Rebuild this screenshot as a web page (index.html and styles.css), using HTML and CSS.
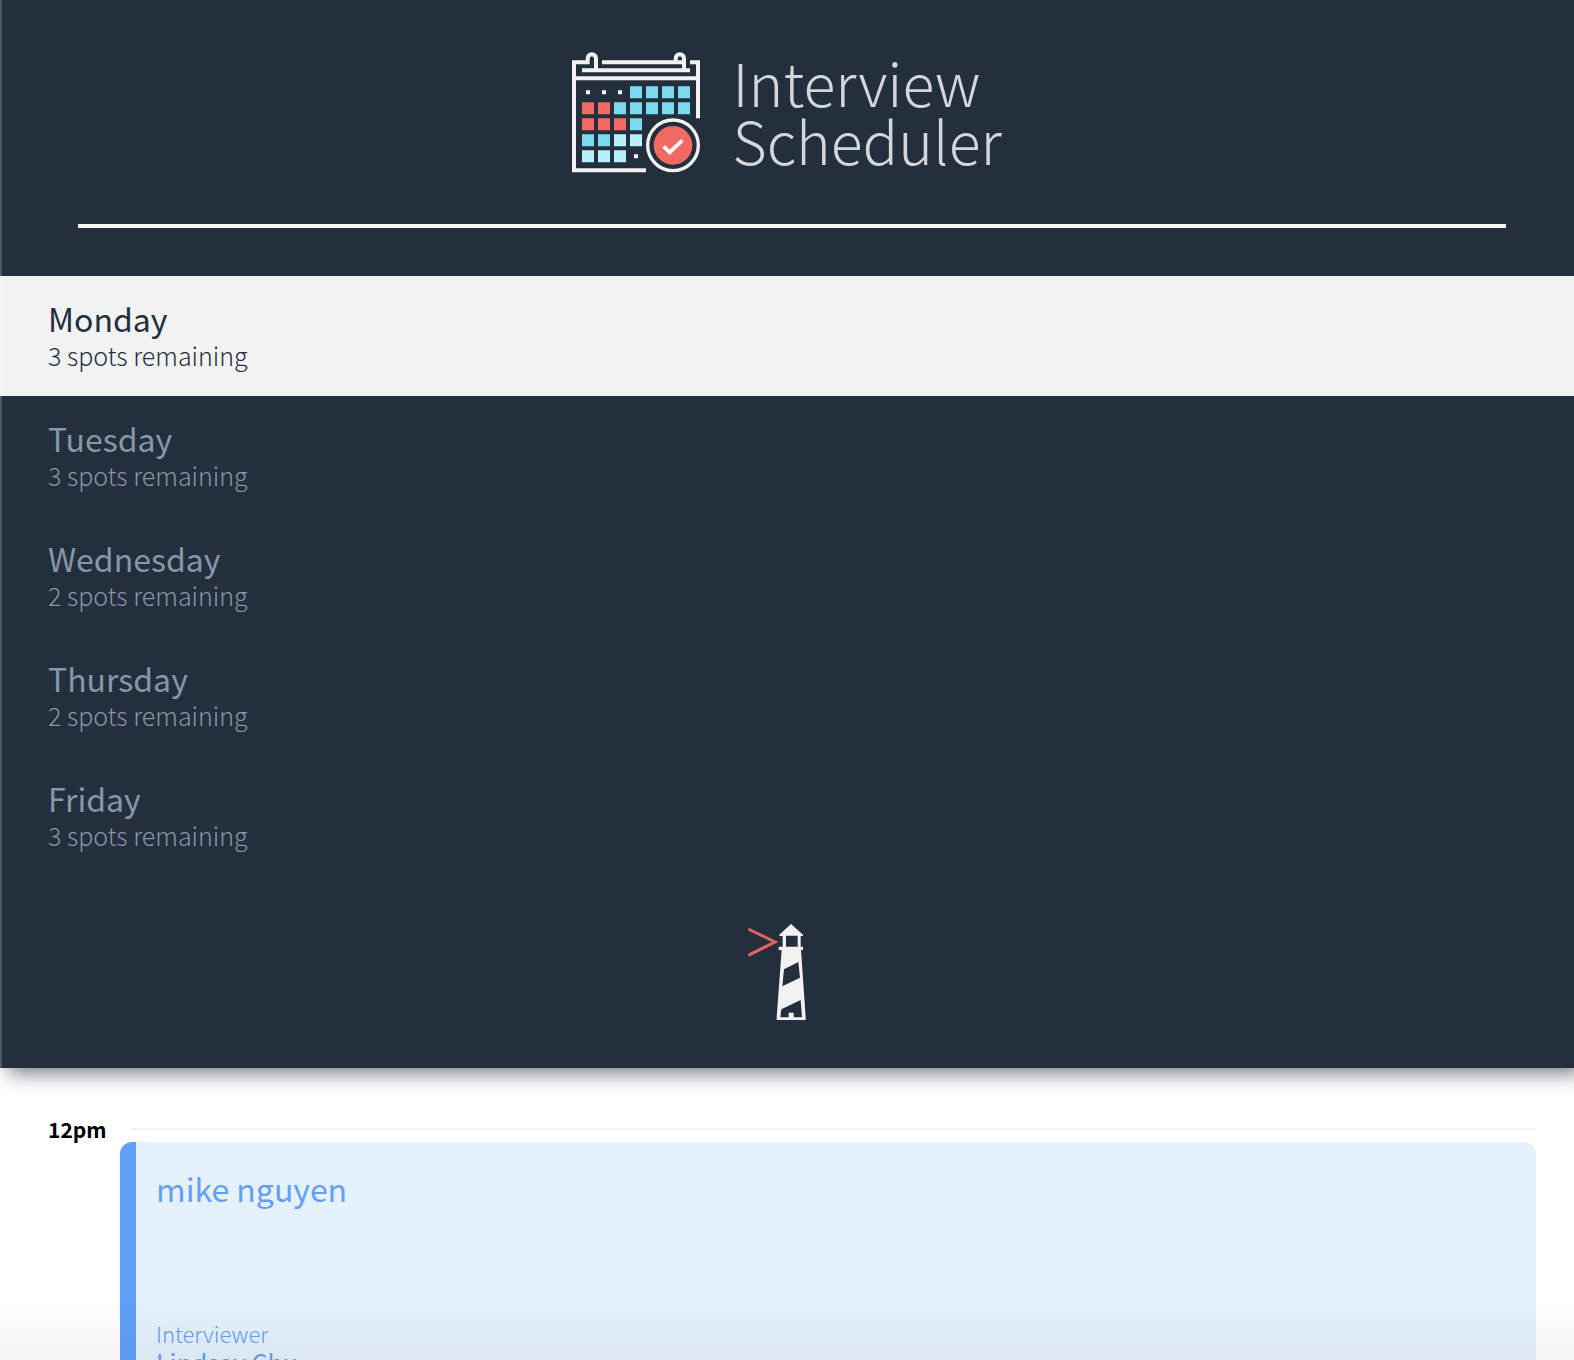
FILE: index.html
```html
<!DOCTYPE html>
<html lang="en">
<head>
  <meta charset="utf-8">
  <meta name="viewport" content="width=device-width, initial-scale=1">
  <title>Interview Scheduler</title>
  <link rel="stylesheet" href="styles.css">
</head>
<body>
  <div class="layout">
    <section class="sidebar">
      <div class="logo">
        <svg class="logo-mark" viewBox="36 20 384 363" aria-hidden="true">
          <g fill="none" stroke="#f2f2f2" stroke-width="12">
            <path d="M108 74V40a12 13 0 0 0-25 0V51H42V375H258M126 51H372M390 51H414V219M66 75H390M372 74V40a12 13 0 0 0-25 0V50M42 99H414"/>
            <circle cx="339" cy="300" r="76" stroke-width="10"/>
          </g>
          <path fill="#f2f2f2" d="M78 135h12v12H78zM126 135h12v12h-12zM174 135h12v12h-12zM222 327h12v12h-12z"/>
          <path fill="#7bdaf0" d="M210 123h36v36h-36zM258 123h36v36h-36zM306 123h36v36h-36zM354 123h36v36h-36zM162 171h36v36h-36zM210 171h36v36h-36zM258 171h36v36h-36zM306 171h36v36h-36zM354 171h36v36h-36zM210 219h36v36h-36zM66 267h36v36H66zM114 267h36v36h-36z"/>
          <path fill="#f06a62" d="M66 171h36v36H66zM114 171h36v36h-36zM66 219h36v36H66zM114 219h36v36h-36zM162 219h36v36h-36z"/>
          <path fill="#b9f1fa" d="M162 267h36v36h-36zM210 267h36v36h-36zM66 315h36v36H66zM114 315h36v36h-36zM162 315h36v36h-36z"/>
          <circle cx="339" cy="300" r="58" fill="#f06a62"/>
          <path d="M311 303l18 18 38-36" fill="none" stroke="#fff" stroke-width="11"/>
        </svg>
        <h1 class="logo-text">Interview<br>Scheduler</h1>
      </div>
      <hr class="separator">
      <nav>
        <ul class="days">
          <li><button class="day day-selected" type="button"><span class="day-name">Monday</span><span class="day-spots">3 spots remaining</span></button></li>
          <li><button class="day" type="button"><span class="day-name">Tuesday</span><span class="day-spots">3 spots remaining</span></button></li>
          <li><button class="day" type="button"><span class="day-name">Wednesday</span><span class="day-spots">2 spots remaining</span></button></li>
          <li><button class="day" type="button"><span class="day-name">Thursday</span><span class="day-spots">2 spots remaining</span></button></li>
          <li><button class="day" type="button"><span class="day-name">Friday</span><span class="day-spots">3 spots remaining</span></button></li>
        </ul>
      </nav>
      <svg class="lighthouse" viewBox="53 39 234 291" role="img" aria-label="Lighthouse Labs">
        <path d="M54 57L134 96L54 136" fill="none" stroke="#e8625d" stroke-width="9"/>
        <path fill="#f2f2f2" fill-rule="evenodd" d="M182 42L218 74V78H211V110H218V120H212L226 322V330H139V322L154 120H145V110H157V78H147V74ZM167 77V110H202V77ZM161 178L204 156L209 203L156 229ZM153 298L211 270L215 322H190V308H175V322H150Z"/>
      </svg>
    </section>
    <main class="schedule">
      <article class="appointment">
        <header class="time"><h2 class="time-label">12pm</h2><hr class="time-line"></header>
        <div class="card">
          <h3 class="student">mike nguyen</h3>
          <div class="interviewer">
            <h4 class="interviewer-label">Interviewer</h4>
            <p class="interviewer-name">Lindsay Chu</p>
          </div>
        </div>
      </article>
    </main>
  </div>
</body>
</html>
```
FILE: styles.css
```css
* {
  box-sizing: border-box;
}

body,
h1, h2, h3, h4, p, ul {
  margin: 0;
  padding: 0;
}

body {
  background: #fff;
  font-family: "Noto Sans CJK SC", "Noto Sans", sans-serif;
}

.layout {
  height: 100vh;
  overflow: hidden;
}

/* window edge */
.layout::before {
  content: "";
  position: fixed;
  z-index: 2;
  inset: 0 auto 0 0;
  width: 2px;
  background: rgba(255, 255, 255, 0.2);
}

/* fade at the foot of the window */
.layout::after {
  content: "";
  position: fixed;
  z-index: 2;
  inset: auto 0 0 0;
  height: 64px;
  pointer-events: none;
  background: linear-gradient(rgba(0, 0, 0, 0), rgba(0, 0, 0, 0.04));
}

.sidebar {
  position: relative;
  display: flex;
  flex-direction: column;
  padding: 52px 0 48px;
  background: #242f3d;
  box-shadow: 8px 4px 20px rgba(36, 47, 61, 0.7);
}

.logo {
  display: flex;
  justify-content: center;
  align-items: center;
  gap: 32px;
}

.logo-mark {
  width: 128px;
  height: 121px;
}

.logo-text {
  padding-bottom: 4px;
  color: #d3d6da;
  font-size: 59px;
  font-weight: 300;
  line-height: 58px;
}

.separator {
  align-self: stretch;
  height: 4px;
  margin: 51px 68px 48px 78px;
  border: 0;
  background: #f5f5f5;
}

.days {
  list-style: none;
}

.day {
  display: flex;
  flex-direction: column;
  width: 100%;
  padding: 24px 48px 23px;
  border: 0;
  background: transparent;
  color: #8796a8;
  font-family: inherit;
  text-align: left;
  cursor: pointer;
}

.day-selected {
  background: #f2f2f2;
  color: #242f3d;
}

.day-name {
  font-size: 32px;
  font-weight: 400;
  line-height: 37px;
}

.day-spots {
  font-size: 25px;
  font-weight: 300;
  line-height: 36px;
}

.lighthouse {
  align-self: center;
  width: 78px;
  height: 97px;
  margin-top: 47px;
}

.schedule {
  padding: 48px 38px 48px 48px;
}

.time {
  display: flex;
  align-items: center;
  gap: 24px;
  height: 26px;
}

.time-label {
  font-size: 21px;
  font-weight: 700;
  line-height: 26px;
}

.time-line {
  flex: 1;
  height: 2px;
  margin: 0;
  border: 0;
  background: #f2f2f2;
}

.card {
  display: flex;
  flex-direction: column;
  justify-content: space-between;
  height: 264px;
  margin-left: 72px;
  padding: 26px 20px 28px;
  border-left: 16px solid #629ff8;
  border-radius: 12px;
  background: #e6f1fe;
  color: #629ff8;
}

.student {
  font-size: 32px;
  font-weight: 400;
  line-height: 40px;
}

.interviewer-label {
  font-size: 22px;
  font-weight: 300;
  line-height: 26px;
}

.interviewer-name {
  font-size: 25px;
  font-weight: 400;
  line-height: 32px;
}
```
